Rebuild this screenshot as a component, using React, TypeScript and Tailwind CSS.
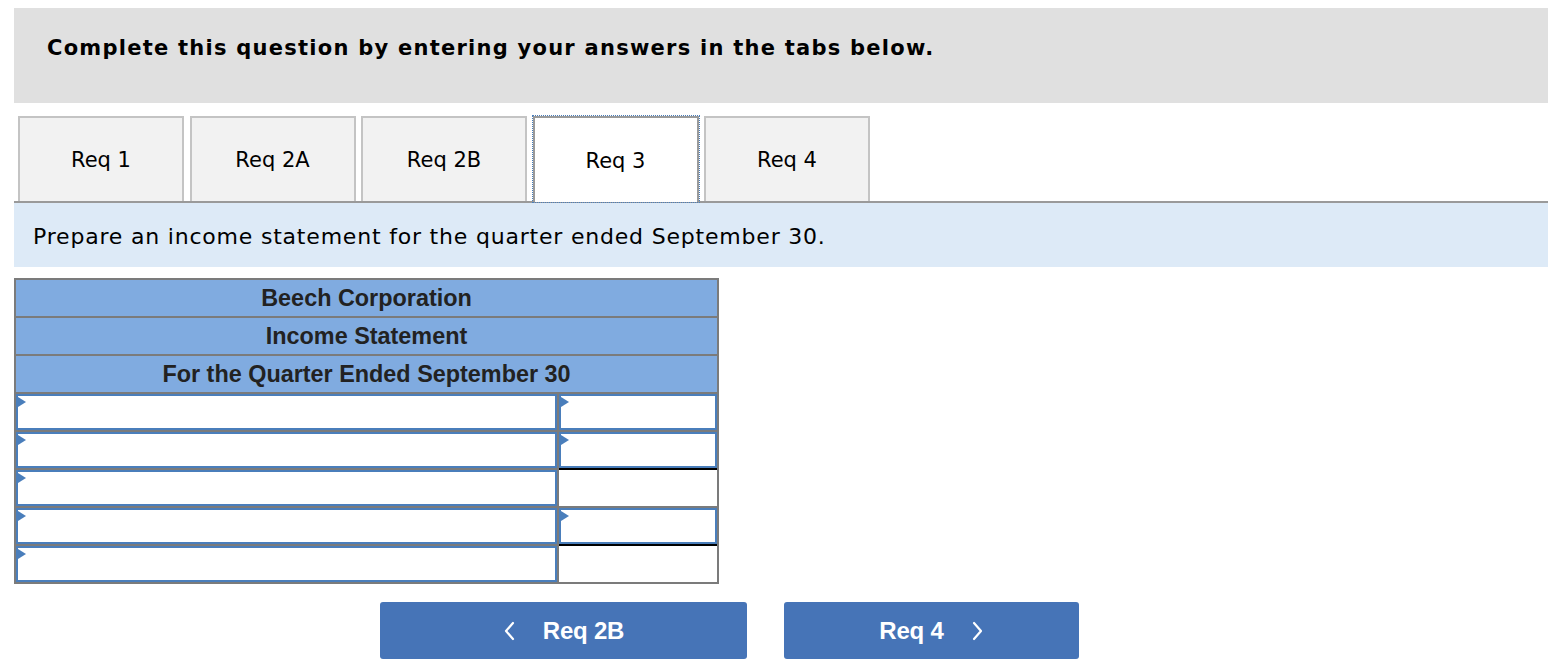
const tabs = ["Req 1", "Req 2A", "Req 2B", "Req 3", "Req 4"]
const ACTIVE = 3

// which rows have an input in the amount column
const rows = [
  { amount: true },
  { amount: true },
  { amount: false },
  { amount: true },
  { amount: false },
]

const Marker = () => (
  <span className="absolute left-0 top-[1px] w-0 h-0 border-y-[5px] border-y-transparent border-l-[8px] border-l-[#4a7ebb]" />
)

const InputCell = ({ marker = true }: { marker?: boolean }) => (
  <div className="relative h-[36px] bg-white border-2 border-[#4a7ebb]">
    {marker && <Marker />}
  </div>
)

const Chevron = ({ dir }: { dir: "left" | "right" }) => (
  <svg width="14" height="22" viewBox="0 0 14 22" fill="none" stroke="white" strokeWidth="2.2" strokeLinecap="round" strokeLinejoin="round">
    {dir === "left" ? <polyline points="10,3 3,11 10,19" /> : <polyline points="4,3 11,11 4,19" />}
  </svg>
)

export default function App() {
  return (
    <div className="bg-white w-[1562px] h-[668px] px-[14px] pt-[8px]" style={{ fontFamily: '"DejaVu Sans", Verdana, sans-serif' }}>
      <div className="h-[95px] bg-[#e0e0e0] pl-[33px] pt-[27px]">
        <h1 className="text-[21px] leading-[26px] font-bold tracking-[1.25px] text-black">Complete this question by entering your answers in the tabs below.</h1>
      </div>

      <div className="mt-[13px] flex gap-[5.5px] pl-[4px] border-b-2 border-[#9a9a9a]">
        {tabs.map((t, i) => (
          <div key={t}
            className={i === ACTIVE
              ? "w-[166px] h-[86px] -mb-[2px] pt-[3px] flex items-center justify-center bg-white border-x-2 border-t-2 border-[#9a9a9a] outline-1 outline-dotted outline-[#4a7ebb] text-[21px] text-black"
              : "w-[166px] h-[85px] pt-[3px] flex items-center justify-center bg-[#f2f2f2] border-2 border-b-0 border-[#c4c4c4] text-[21px] text-black"}>
            {t}
          </div>
        ))}
      </div>

      <div className="h-[64px] bg-[#ddeaf7] pl-[19px] pt-[3px] flex items-center">
        <p className="text-[22px] tracking-[0.8px] text-black">Prepare an income statement for the quarter ended September 30.</p>
      </div>

      <div className="mt-[11px] w-[705px] border-x-2 border-b-2 border-[#7b7b7b] bg-[#7b7b7b]" style={{ fontFamily: '"Liberation Sans", Arial, sans-serif' }}>
        {["Beech Corporation", "Income Statement", "For the Quarter Ended September 30"].map(h => (
          <div key={h} className="h-[38px] border-t-2 border-[#7b7b7b] bg-[#80abe0] pt-[2px] flex items-center justify-center text-[23.4px] font-bold text-[#222]">
            {h}
          </div>
        ))}
        {rows.map((r, i) => (
          <div key={i} className="h-[38px] flex gap-[2px]">
            <div className="w-[541px] pt-[2px]">
              <InputCell />
            </div>
            <div className="flex-1">
              {r.amount ? (
                <div className="pt-[2px]"><InputCell /></div>
              ) : (
                <div className="h-[38px] bg-white border-t-2 border-black" />
              )}
            </div>
          </div>
        ))}
      </div>

      <div className="mt-[18px] ml-[366px] flex gap-[37px]" style={{ fontFamily: '"Liberation Sans", Arial, sans-serif' }}>
        <button className="w-[367px] h-[57px] rounded-[3px] bg-[#4674b7] flex items-center justify-center gap-[26px] text-white text-[24px] font-bold tracking-[-0.2px]">
          <Chevron dir="left" />
          <span>Req 2B</span>
        </button>
        <button className="w-[295px] h-[57px] rounded-[3px] bg-[#4674b7] flex items-center justify-center gap-[26px] text-white text-[24px] font-bold tracking-[-0.2px]">
          <span>Req 4</span>
          <Chevron dir="right" />
        </button>
      </div>
    </div>
  )
}
